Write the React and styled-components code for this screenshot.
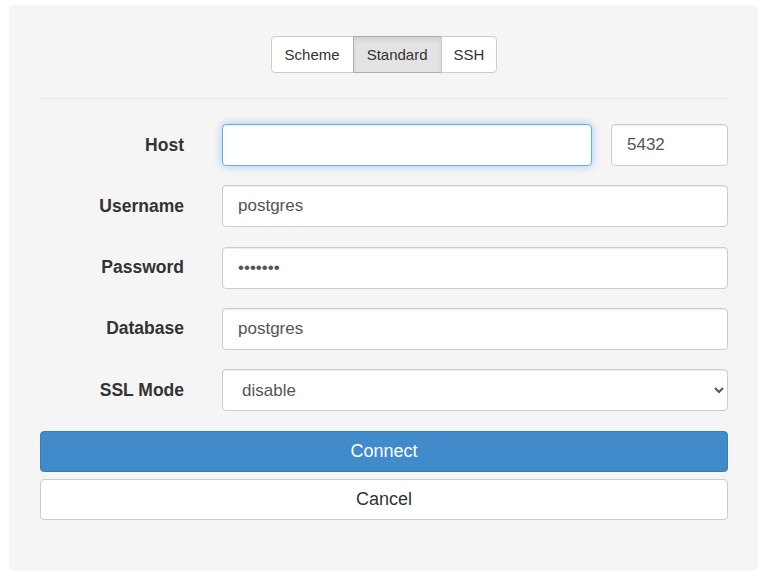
import { createGlobalStyle } from 'styled-components';
import styled from 'styled-components';

const GlobalStyle = createGlobalStyle`
	* { box-sizing: border-box; }
	body {
		margin: 0;
		background: #fff;
		font-family: 'Liberation Sans', Arial, sans-serif;
		color: #333;
	}
`;

const Panel = styled.div`
	margin: 5px 8px 10px 9px;
	height: 566px;
	background: #f5f5f5;
	border-radius: 5px;
	padding: 31px 30px 0 31px;
`;

const Tabs = styled.div`
	display: flex;
	justify-content: center;
	padding-bottom: 25px;
	border-bottom: 1px solid #e6e6e6;
`;

const Tab = styled.button`
	height: 37px;
	padding: 0 ${(p) => p.$pad}px;
	font: 15px 'Liberation Sans', Arial, sans-serif;
	color: #333;
	background: ${(p) => (p.$active ? '#e3e3e3' : '#fff')};
	border: 1px solid ${(p) => (p.$active ? '#adadad' : '#ccc')};
	box-shadow: ${(p) => (p.$active ? 'inset 0 3px 5px rgba(0,0,0,0.08)' : 'none')};
	margin-left: -1px;
	&:first-child {
		border-radius: 4px 0 0 4px;
		margin-left: 0;
	}
	&:last-child {
		border-radius: 0 4px 4px 0;
	}
`;

const Form = styled.div`
	display: flex;
	flex-direction: column;
	gap: 19.3px;
	padding-top: 25px;
`;

const Row = styled.div`
	display: grid;
	grid-template-columns: 144px 1fr;
	column-gap: 38px;
	align-items: center;
`;

const Label = styled.label`
	text-align: right;
	font-weight: bold;
	font-size: 17.5px;
	color: #333;
`;

const Fields = styled.div`
	display: flex;
	gap: 19px;
`;

const Input = styled.input`
	width: ${(p) => (p.$w ? `${p.$w}px` : '100%')};
	flex: ${(p) => (p.$w ? 'none' : '1')};
	height: 42px;
	padding: 0 15px;
	font: 17px 'Liberation Sans', Arial, sans-serif;
	color: #555;
	background: #fff;
	border: 1px solid ${(p) => (p.$focus ? '#66afe9' : '#ccc')};
	border-radius: 4px;
	box-shadow: ${(p) =>
		p.$focus
			? 'inset 0 1px 1px rgba(0,0,0,.075), 0 0 8px rgba(102,175,233,.6)'
			: 'inset 0 1px 1px rgba(0,0,0,.075)'};
	outline: none;
`;

const Select = styled.select`
	width: 100%;
	height: 42px;
	padding: 0 12px 0 15px;
	font: 17px 'Liberation Sans', Arial, sans-serif;
	color: #555;
	background: #fff;
	border: 1px solid #ccc;
	border-radius: 4px;
	box-shadow: inset 0 1px 1px rgba(0,0,0,.075);
	outline: none;
`;

const Actions = styled.div`
	display: flex;
	flex-direction: column;
	gap: 7px;
	margin-top: 1px;
`;

const Button = styled.button`
	height: 41px;
	width: 100%;
	font: 18px 'Liberation Sans', Arial, sans-serif;
	color: ${(p) => (p.$primary ? '#fff' : '#333')};
	background: ${(p) => (p.$primary ? '#428bca' : '#fff')};
	border: 1px solid ${(p) => (p.$primary ? '#357ebd' : '#ccc')};
	border-radius: 4px;
`;

export default function App() {
	return (
		<>
			<GlobalStyle />
			<Panel>
				<Tabs>
					<Tab $pad={13}>Scheme</Tab>
					<Tab $pad={13} $active>Standard</Tab>
					<Tab $pad={12}>SSH</Tab>
				</Tabs>
				<Form>
					<Row>
						<Label>Host</Label>
						<Fields>
							<Input $focus defaultValue='' />
							<Input $w={117} defaultValue='5432' />
						</Fields>
					</Row>
					<Row>
						<Label>Username</Label>
						<Input defaultValue='postgres' />
					</Row>
					<Row>
						<Label>Password</Label>
						<Input type='password' defaultValue='1234567' />
					</Row>
					<Row>
						<Label>Database</Label>
						<Input defaultValue='postgres' />
					</Row>
					<Row>
						<Label>SSL Mode</Label>
						<Select defaultValue='disable'>
							<option value='disable'>disable</option>
							<option value='require'>require</option>
							<option value='verify-full'>verify-full</option>
						</Select>
					</Row>
					<Actions>
						<Button $primary>Connect</Button>
						<Button>Cancel</Button>
					</Actions>
				</Form>
			</Panel>
		</>
	);
}
